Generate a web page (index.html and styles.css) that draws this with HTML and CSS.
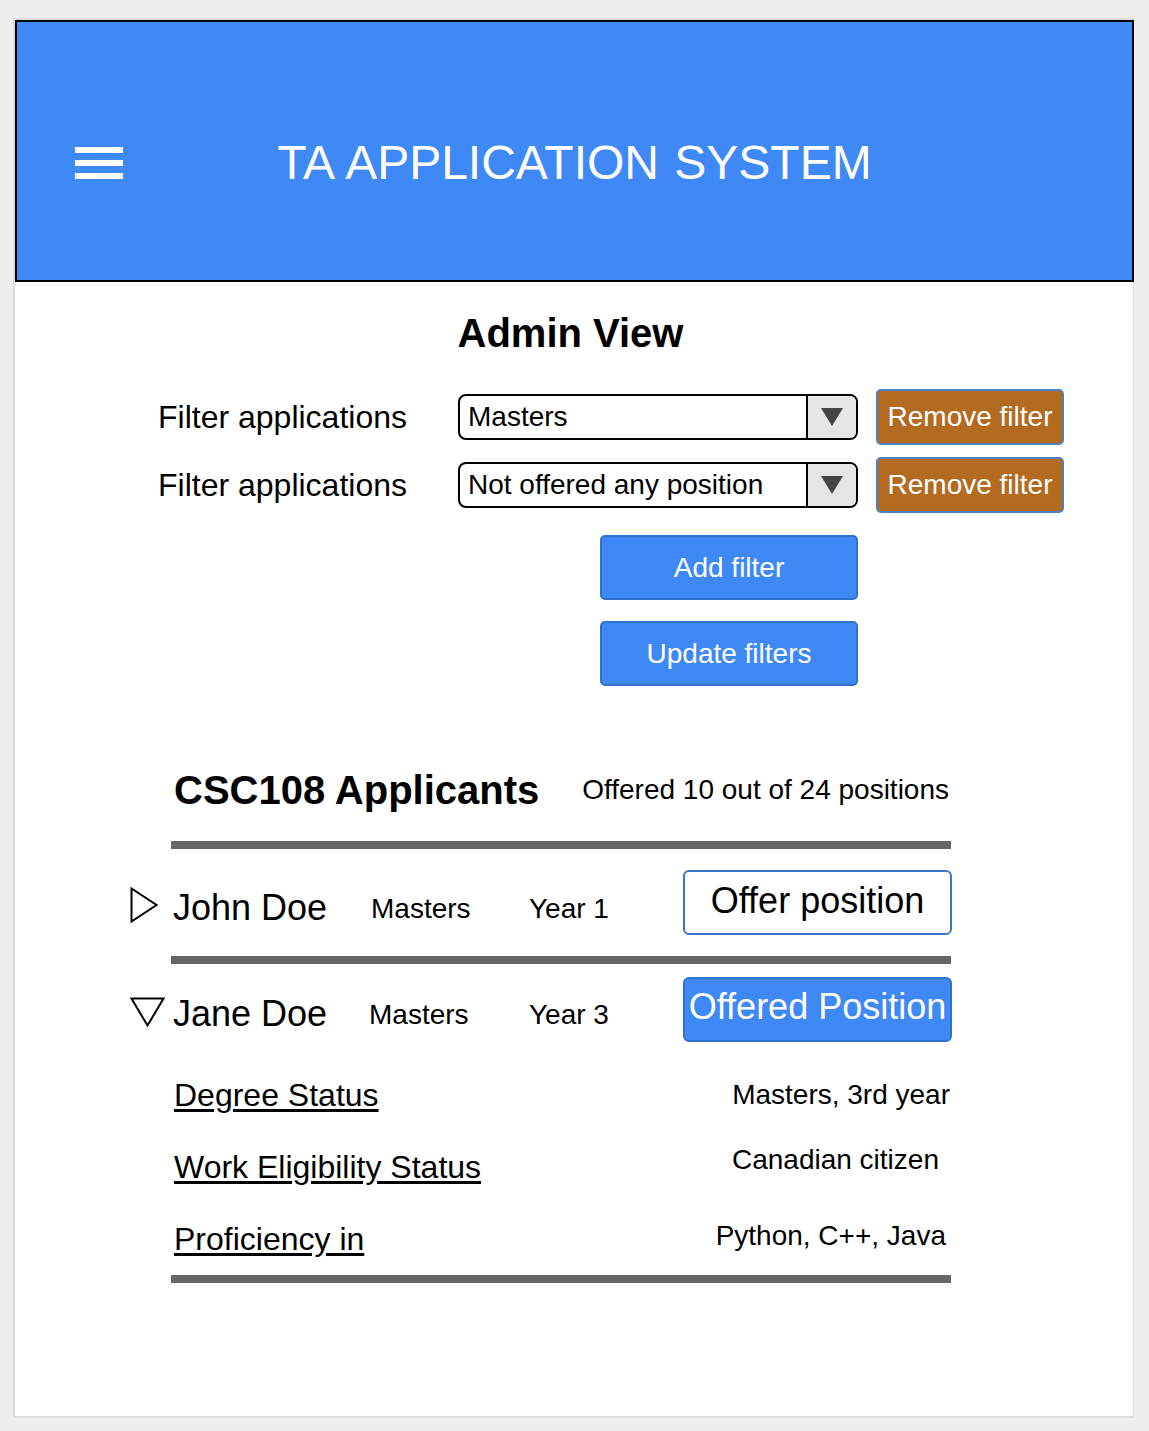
FILE: index.html
```html
<!DOCTYPE html>
<html>
<head>
<meta charset="utf-8">
<link rel="stylesheet" href="styles.css">
</head>
<body>
<div class="frame">
  <header class="topbar">
    <div class="hamburger"><span></span><span></span><span></span></div>
    <h1 class="title">TA APPLICATION SYSTEM</h1>
    <div></div>
  </header>

  <h2 class="view-title">Admin View</h2>

  <div class="filters">
    <div class="filter-row">
      <div class="filter-label">Filter applications</div>
      <div class="select"><span class="select-text">Masters</span><span class="select-arrow"><svg width="22" height="18" viewBox="0 0 22 18"><polygon points="0,0 22,0 11,18" fill="#444"/></svg></span></div>
      <button class="btn btn-brown">Remove filter</button>
    </div>
    <div class="filter-row">
      <div class="filter-label">Filter applications</div>
      <div class="select"><span class="select-text">Not offered any position</span><span class="select-arrow"><svg width="22" height="18" viewBox="0 0 22 18"><polygon points="0,0 22,0 11,18" fill="#444"/></svg></span></div>
      <button class="btn btn-brown">Remove filter</button>
    </div>
    <div class="filter-actions">
      <button class="btn btn-blue btn-action">Add filter</button>
      <button class="btn btn-blue btn-action">Update filters</button>
    </div>
  </div>

  <section class="applicants">
    <div class="app-head">
      <h3 class="course">CSC108 Applicants</h3>
      <div class="offered-count">Offered 10 out of 24 positions</div>
    </div>
    <div class="divider"></div>

    <div class="app-row row-collapsed">
      <span class="toggle"><svg width="28" height="36" viewBox="0 0 28 36"><polygon points="1.5,1.5 26.5,18 1.5,34.5" fill="none" stroke="#000" stroke-width="2"/></svg></span>
      <span class="name">John Doe</span>
      <span class="degree">Masters</span>
      <span class="year">Year 1</span>
      <button class="btn btn-offer">Offer position</button>
    </div>
    <div class="divider"></div>

    <div class="app-row row-expanded">
      <span class="toggle toggle-down"><svg width="35" height="30" viewBox="0 0 35 30"><polygon points="1.5,1.5 33.5,1.5 17.5,28.5" fill="none" stroke="#000" stroke-width="2"/></svg></span>
      <span class="name">Jane Doe</span>
      <span class="degree degree-2">Masters</span>
      <span class="year">Year 3</span>
      <button class="btn btn-offered">Offered Position</button>
    </div>

    <div class="details">
      <div class="detail-row">
        <span class="detail-label">Degree Status</span>
        <span class="detail-value">Masters, 3rd year</span>
      </div>
      <div class="detail-row">
        <span class="detail-label">Work Eligibility Status</span>
        <span class="detail-value value-citizen">Canadian citizen</span>
      </div>
      <div class="detail-row">
        <span class="detail-label">Proficiency in</span>
        <span class="detail-value value-prof">Python, C++, Java</span>
      </div>
    </div>
    <div class="divider"></div>
  </section>
</div>
</body>
</html>
```

FILE: styles.css
```css
html, body {
  margin: 0;
  padding: 0;
}
body {
  background: #eeeeee;
  font-family: "Liberation Sans", Arial, sans-serif;
  color: #000;
  padding: 18px 0 0 13px;
}
.frame {
  box-sizing: border-box;
  width: 1121px;
  height: 1400px;
  background: #fff;
  border: 2px solid #dddddd;
  border-right-width: 1px;
}
.topbar {
  box-sizing: border-box;
  height: 262px;
  margin-right: -1px;
  background: #3e89f5;
  border: 2px solid #000;
  display: grid;
  grid-template-columns: 1fr auto 1fr;
  align-items: center;
  padding-top: 24px;
}
.hamburger {
  margin-left: 58px;
  width: 48px;
  display: flex;
  flex-direction: column;
  gap: 7px;
}
.hamburger span {
  display: block;
  height: 6px;
  background: #fff;
}
.title {
  margin: 0;
  font-weight: normal;
  font-size: 48px;
  color: #fff;
  line-height: 56px;
  word-spacing: 2px;
}
.view-title {
  margin: 31px 0 0;
  text-align: center;
  font-size: 40px;
  line-height: 40px;
  font-weight: bold;
  padding-right: 7px;
}
.filters {
  margin: 36px 0 0 143px;
  display: flex;
  flex-direction: column;
}
.filter-row {
  display: flex;
  align-items: center;
  height: 56px;
  margin-bottom: 12px;
}
.filter-label {
  width: 300px;
  font-size: 32px;
}
.select {
  box-sizing: border-box;
  width: 400px;
  height: 46px;
  border: 2px solid #000;
  border-radius: 8px;
  display: flex;
  align-items: stretch;
  overflow: hidden;
}
.select-text {
  flex: 1;
  display: flex;
  align-items: center;
  padding-left: 8px;
  font-size: 28px;
}
.select-arrow {
  width: 48px;
  border-left: 2px solid #000;
  background: #e5e5e5;
  display: flex;
  align-items: center;
  justify-content: center;
}
.btn {
  font-family: "Liberation Sans", Arial, sans-serif;
  cursor: pointer;
  padding: 0;
}
.btn-brown {
  box-sizing: border-box;
  margin-left: 18px;
  width: 188px;
  height: 56px;
  background: #b36b21;
  border: 2px solid #4d7fbf;
  border-radius: 5px;
  color: #fff;
  font-size: 28px;
}
.filter-actions {
  margin: 10px 0 0 442px;
  display: flex;
  flex-direction: column;
  gap: 21px;
}
.btn-blue {
  box-sizing: border-box;
  width: 258px;
  height: 65px;
  background: #3e89f5;
  border: 2px solid #2f72cc;
  border-radius: 5px;
  color: #fff;
  font-size: 28px;
}
.applicants {
  margin: 64px 0 0 156px;
  width: 780px;
}
.app-head {
  height: 80px;
  display: flex;
  align-items: center;
  justify-content: space-between;
  padding-left: 3px;
  padding-right: 2px;
}
.course {
  margin: 0;
  font-size: 40px;
  font-weight: bold;
}
.offered-count {
  font-size: 28px;
}
.divider {
  height: 8px;
  background: #666666;
}
.app-head + .divider {
  margin-top: 11px;
}
.app-row {
  display: flex;
  align-items: center;
}
.row-collapsed {
  height: 107px;
}
.row-expanded {
  height: 90px;
}
.toggle {
  width: 28px;
  margin-left: -41px;
  margin-right: 15px;
  display: flex;
  align-items: center;
  padding-top: 4px;
}
.toggle-down {
  width: 35px;
  margin-right: 8px;
  padding-top: 6px;
}
.name {
  width: 198px;
  font-size: 36px;
  padding-top: 10px;
}
.degree {
  width: 158px;
  font-size: 28px;
  padding-top: 12px;
}
.degree-2 {
  margin-left: -2px;
  width: 160px;
}
.year {
  font-size: 28px;
  padding-top: 12px;
}
.btn-offer, .btn-offered {
  box-sizing: border-box;
  margin-left: auto;
  margin-right: -1px;
  width: 269px;
  height: 65px;
  border-radius: 6px;
  font-size: 36px;
  line-height: 1;
  padding-bottom: 4px;
}
.btn-offer {
  background: #fff;
  border: 2px solid #3a76c6;
  color: #000;
}
.btn-offered {
  background: #3e89f5;
  border: 2px solid #2f72cc;
  color: #fff;
}
.details {
  margin-top: 5px;
  padding-left: 3px;
}
.detail-row {
  height: 72px;
  display: flex;
  align-items: center;
  justify-content: space-between;
}
.detail-label {
  font-size: 32px;
  text-decoration: underline;
  text-underline-offset: 3px;
}
.detail-value {
  font-size: 28px;
  padding-right: 1px;
}
.value-citizen {
  padding-right: 12px;
  margin-top: -14px;
}
.value-prof {
  padding-right: 5px;
  margin-top: -6px;
}
```
